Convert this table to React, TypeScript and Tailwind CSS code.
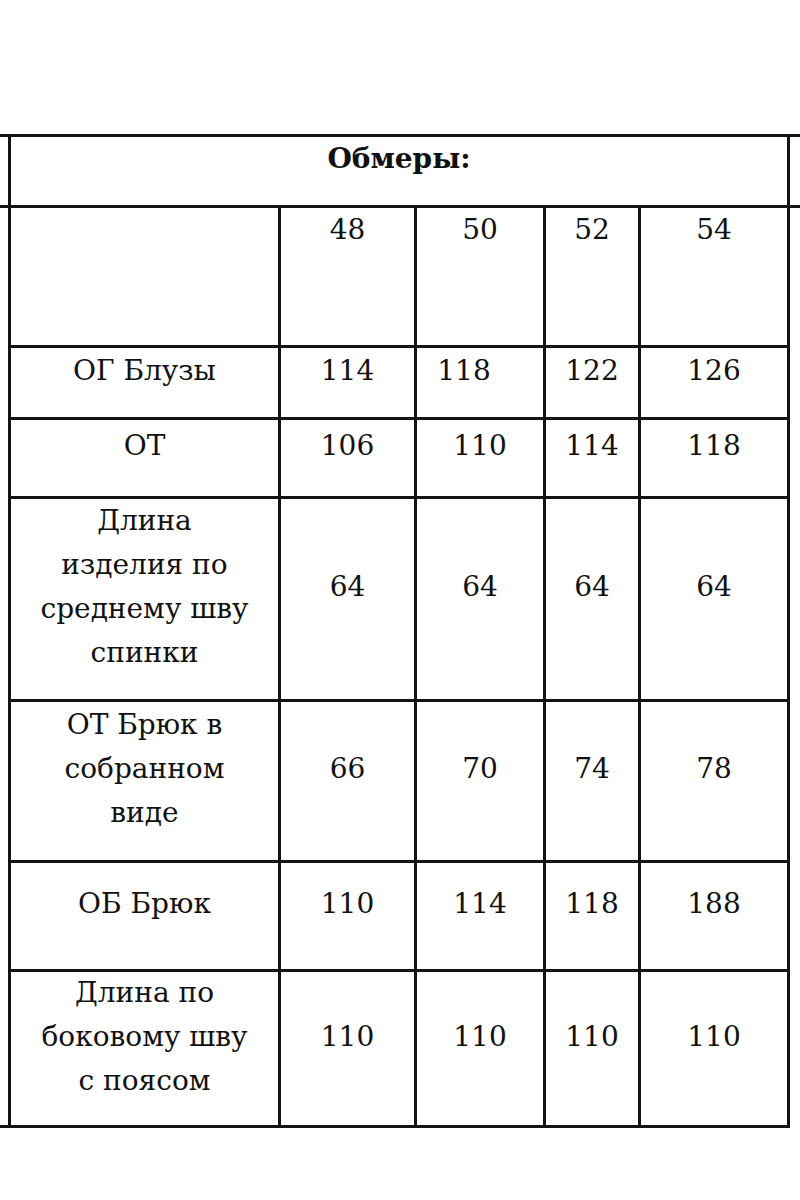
import React from "react";

const sizes = ["48", "50", "52", "54"];

const rows: { label: React.ReactNode; values: string[]; shift?: Record<number, string> }[] = [
  { label: "ОГ Блузы", values: ["114", "118", "122", "126"], shift: { 1: "pr-[32px]" } },
  { label: "ОТ", values: ["106", "110", "114", "118"] },
  {
    label: (
      <>
        Длина
        <br />
        изделия по
        <br />
        среднему шву
        <br />
        спинки
      </>
    ),
    values: ["64", "64", "64", "64"],
  },
  {
    label: (
      <>
        ОТ Брюк в
        <br />
        собранном
        <br />
        виде
      </>
    ),
    values: ["66", "70", "74", "78"],
  },
  { label: "ОБ Брюк", values: ["110", "114", "118", "188"] },
  {
    label: (
      <>
        Длина по
        <br />
        боковому шву
        <br />
        с поясом
      </>
    ),
    values: ["110", "110", "110", "110"],
  },
];

const cell = "bg-white flex items-center justify-center text-center pb-[24px] leading-[44px]";

export default function App() {
  return (
    <div
      className="w-[800px] h-[1200px] bg-white text-[#111] text-[28px]"
      style={{ fontFamily: '"DejaVu Serif", "Liberation Serif", serif' }}
    >
      <div className="h-[134px]" />
      <div className="flex border-t-[3px] border-[#141414]">
        {/* left cut-off column */}
        <div className="w-[8px] flex flex-col">
          <div className="h-[71px] border-b-[3px] border-[#141414]" />
          <div className="h-[920px] border-b-[3px] border-[#141414]" />
        </div>

        {/* measurements table */}
        <div className="grid grid-cols-[267px_133px_126px_92px_146px] grid-rows-[68px_137px_69px_76px_200px_158px_106px_153px] gap-[3px] bg-[#141414] border-x-[3px] border-b-[3px] border-[#141414]">
          <div className={`${cell} col-span-5 font-bold`}>Обмеры:</div>

          <div className="bg-white" />
          {sizes.map((s) => (
            <div key={s} className="bg-white flex justify-center pt-[5px] leading-[33px]">
              {s}
            </div>
          ))}

          {rows.map((r, i) => (
            <React.Fragment key={i}>
              <div className={cell}>
                <div>{r.label}</div>
              </div>
              {r.values.map((v, j) => (
                <div key={j} className={`${cell} ${r.shift?.[j] ?? ""}`}>
                  {v}
                </div>
              ))}
            </React.Fragment>
          ))}
        </div>

        {/* right cut-off column */}
        <div className="w-[10px] flex flex-col">
          <div className="h-[71px] border-b-[3px] border-[#141414]" />
        </div>
      </div>
    </div>
  );
}
